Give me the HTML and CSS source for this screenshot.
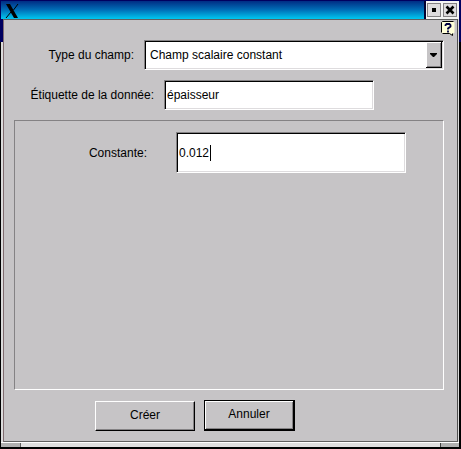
FILE: index.html
```
<!DOCTYPE html>
<html lang="fr">
<head>
<meta charset="utf-8">
<title>Champ</title>
<link rel="stylesheet" href="styles.css">
</head>

<body>

<div id="window">

	<div id="titlebar">
		<svg class="xlogo" width="16" height="14" viewBox="0 0 16 14">
			<path d="M1 0H5L13 14H9Z" fill="#000"/>
			<path d="M13 0L8.5 6M6 8L1 14" stroke="#000"/>
		</svg>
		<div id="titlebuttons">
			<button type="button" class="titlebutton" aria-label="Agrandir">
				<svg width="12" height="12"><rect x="4" y="4" width="4" height="4"/></svg>
			</button>
			<button type="button" class="titlebutton" aria-label="Fermer">
				<svg width="12" height="12"><path d="M2.5 2.5L9.5 9.5M9.5 2.5L2.5 9.5" stroke="#000" stroke-width="2.6"/></svg>
			</button>
		</div>
	</div>

	<div id="body">
		<form id="client">
			<button type="button" id="help" aria-label="Aide">
				<svg width="14" height="15" viewBox="0 0 14 15">
					<path d="M1.5 .5H12.5L13.5 1.5V11.5L12 12.5V14.5L8.5 12.5H1.5L.5 11.5V1.5Z" fill="#ffffd8"/>
					<path d="M.5 11.5V1.5L1.5 .5H12.5M1.5 12.5H8.5L11.5 14.5V12.5" fill="none" stroke="#000"/>
					<path d="M4.5 5V4L5.5 3H8.5L9.5 4V5.5L7 7.5V8.5M7 9.5V11.5" fill="none" stroke="#000040" stroke-width="1.8"/>
				</svg>
			</button>

			<div class="row typerow">
				<label for="type">Type du champ:</label>
				<div class="combo sunken">
					<select id="type">
						<option>Champ scalaire constant</option>
					</select>
					<svg class="arrow" width="16" height="26" viewBox="0 0 16 26"><path d="M4 11H11V12L8 15H7L4 12Z"/></svg>
				</div>
			</div>

			<div class="row namerow">
				<label for="etiquette">Étiquette de la donnée:</label>
				<input type="text" class="sunken" id="etiquette" value="épaisseur">
			</div>

			<div id="frame">
				<div class="row valuerow">
					<label for="constante">Constante:</label>
					<div class="valuebox">
						<input type="text" class="sunken" id="constante" value="0.012">
						<span class="caret"></span>
					</div>
				</div>
			</div>

			<div id="buttons">
				<button type="button" class="push">Créer</button>
				<button type="button" class="push default">Annuler</button>
			</div>
		</form>
	</div>

	<div id="grip"></div>

</div> <!-- ends div#window -->

</body>
</html>
```

FILE: styles.css
```
*{
	box-sizing: border-box;
}

body{
	margin: 0;
	background: #000;
	color: #000;
	font-family: "Liberation Sans", Arial, sans-serif;
	font-size: 12px;
	line-height: 16px;
}

button, input, select{
	font: inherit;
	color: inherit;
	margin: 0;
	padding: 0;
	border-radius: 0;
}

svg{
	display: block;
}

#window{
	display: flex;
	flex-direction: column;
	min-height: 100vh;
	padding: 1px 2px 2px 1px;
	background: linear-gradient(#000060 42px, #000 42px);
}

#titlebar{
	display: flex;
	justify-content: space-between;
	height: 18px;
	padding-left: 4px;
	background: linear-gradient(#002c84, #0070b8 50%, #00c8f0);
}

.xlogo{
	margin-top: 3px;
}

#titlebuttons{
	display: flex;
	gap: 2px;
	padding: 2px 2px 2px 1px;
	background: #f4f4f4;
	border-left: 2px solid #000030;
}

.titlebutton{
	display: flex;
	align-items: center;
	justify-content: center;
	width: 14px;
	height: 14px;
	background: #dedcde;
	border: 1px solid #848284;
}

#body{
	display: flex;
	flex: 1;
	padding: 0 1px 0 2px;
	background: linear-gradient(90deg, transparent 2px, #dcdcdc 2px) 0 0 / 100% 23px no-repeat,
		linear-gradient(#000060, #000060) 0 0 / 2px 23px no-repeat, #dcdcdc;
}

#client{
	position: relative;
	flex: 1;
	padding: 20px 13px 10px 10px;
	background: #c6c4c6;
	border: 1px solid;
	border-color: #606060 #505050 #606060 #806c70;
}

#help{
	position: absolute;
	top: 1px;
	right: 2px;
	background: none;
	border: 0;
}

.row{
	display: flex;
	align-items: center;
}

label{
	flex: none;
	text-align: right;
	white-space: nowrap;
}

.sunken{
	padding: 1px;
	background: #fff;
	border: 1px solid;
	border-color: #848284 #fff #fff #848284;
	box-shadow: inset 1px 1px #000, inset -1px -1px #dedcde;
	outline: 0;
}

.typerow label{
	width: 120px;
}

.combo{
	position: relative;
	flex: 1;
	height: 30px;
	margin-left: 10px;
}

.combo select{
	display: block;
	width: 100%;
	height: 26px;
	padding-left: 4px;
	appearance: none;
	background: none;
	border: 0;
	outline: 0;
}

.arrow{
	position: absolute;
	top: 1px;
	right: 1px;
	background: #c6c4c6;
	box-shadow: inset -1px -1px #000, inset 1px 1px #fff, inset -2px -2px #848284;
	pointer-events: none;
}

.namerow{
	margin-top: 10px;
}

.namerow label{
	width: 140px;
}

#etiquette{
	flex: 0 1 210px;
	min-width: 0;
	height: 30px;
	margin-left: 10px;
	padding-left: 2px;
}

#frame{
	height: 270px;
	margin-top: 10px;
	padding-top: 11px;
	border: 1px solid;
	border-color: #848284 #fff #fff #848284;
}

.valuerow label{
	width: 132px;
}

.valuebox{
	position: relative;
	flex: 0 1 230px;
	min-width: 0;
	margin-left: 29px;
}

#constante{
	display: block;
	width: 100%;
	height: 41px;
	padding-left: 2px;
}

.caret{
	position: absolute;
	top: 13px;
	left: 34px;
	width: 1px;
	height: 16px;
	background: #000;
}

#buttons{
	display: flex;
	align-items: center;
	gap: 9px;
	margin: 10px 0 0 81px;
}

.push{
	width: 100px;
	height: 30px;
	padding-bottom: 2px;
	background: #c6c4c6;
	border: 1px solid;
	border-color: #fff #000 #000 #fff;
	box-shadow: inset -1px -1px #848284;
}

.default{
	width: 91px;
	height: 31px;
	border: 1px solid #000;
	border-width: 1px 2px 2px 1px;
	box-shadow: inset 1px 1px #fff, inset -1px -1px #848284;
}

#grip{
	height: 5px;
	background: linear-gradient(#606060, #606060) 19px 0 / 1px 5px no-repeat,
		linear-gradient(#404040, #404040) right 18px top 0 / 1px 5px no-repeat,
		linear-gradient(90deg, #b0b0b0 19px, #e0e0e0 19px, #e0e0e0 calc(100% - 18px), #b0b0b0 calc(100% - 18px));
	border-top: 1px solid #fff;
}
```
